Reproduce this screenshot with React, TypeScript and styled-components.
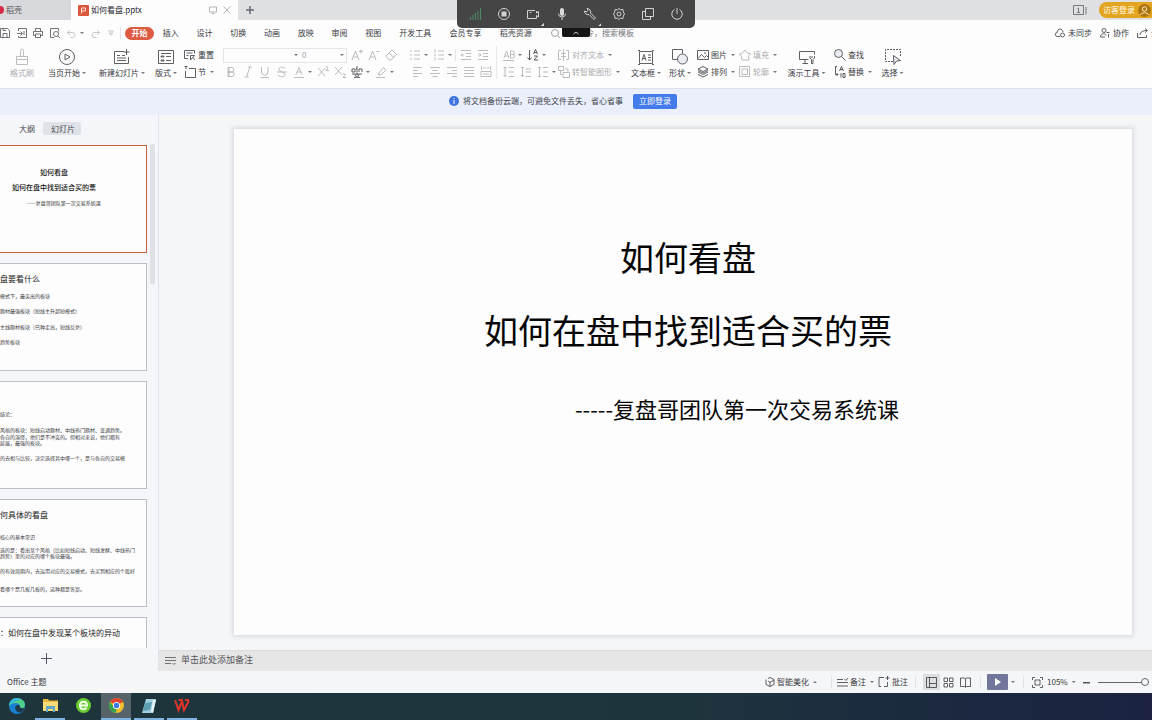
import React from 'react';
import styled, { createGlobalStyle, css } from 'styled-components';

const GlobalStyle = createGlobalStyle`
  *, *::before, *::after { box-sizing: border-box; }
  html, body { margin: 0; height: 100%; }
  body {
    overflow: hidden;
    background: #f4f6f8;
    color: #3a3a3e;
    font-family: "Noto Sans CJK SC", "Noto Sans", sans-serif;
    font-size: 8px;
    line-height: 12px;
  }
  button, input {
    font: inherit;
    color: inherit;
    border: 0;
    margin: 0;
    padding: 0;
    background: none;
  }
  button { white-space: nowrap; text-align: left; }
  ul { list-style: none; margin: 0; padding: 0; }
`;

/* ---------- shared ---------- */

const Svg = styled.svg<{ $w?: number; $h?: number }>`
  display: block;
  flex: none;
  width: ${(p) => p.$w ?? 12}px;
  height: ${(p) => p.$h ?? p.$w ?? 12}px;
  fill: none;
  stroke: currentColor;
  stroke-width: 1;
  overflow: visible;
`;

const LineIcon = styled(Svg)`
  opacity: 0.8;
`;

type IconProps = { d: string; w?: number; h?: number; children?: React.ReactNode };

function Icon({ d, w = 12, h, children }: IconProps) {
  return (
    <LineIcon $w={w} $h={h ?? w} viewBox={`0 0 ${w} ${h ?? w}`} aria-hidden="true">
      <path d={d} />
      {children}
    </LineIcon>
  );
}

const CaretShape = styled.span<{ $up?: boolean }>`
  flex: none;
  width: 4px;
  height: 2px;
  background: #77777c;
  clip-path: ${(p) => (p.$up ? 'polygon(50% 0, 100% 100%, 0 100%)' : 'polygon(0 0, 100% 0, 50% 100%)')};
`;

const Divider = styled.span<{ $gap?: number; $h?: number }>`
  flex: none;
  width: 1px;
  height: ${(p) => p.$h ?? 12}px;
  margin: 0 ${(p) => p.$gap ?? 2}px;
  background: #e2e3e6;
`;

const Screen = styled.div`
  position: relative;
  display: flex;
  flex-direction: column;
  height: 100vh;
  overflow: hidden;
`;

/* ---------- title bar ---------- */

const TitleBar = styled.header`
  display: flex;
  flex: 0 0 20px;
  align-items: center;
  background: #e0e1e3;
`;

const DocTab = styled.div<{ $active?: boolean; $w: number }>`
  display: flex;
  flex: 0 0 ${(p) => p.$w}px;
  align-items: center;
  gap: 2px;
  height: 100%;
  padding: 0 7px;
  background: ${(p) => (p.$active ? '#fdfdfe' : '#d8d9dc')};
  color: ${(p) => (p.$active ? '#26262a' : '#55555a')};
`;

const DocName = styled.span`
  flex: 1;
  white-space: nowrap;
`;

const DaokeMark = styled.span`
  width: 8px;
  height: 8px;
  margin-left: -11px;
  border-radius: 50%;
  background: #d8294a;
`;

const TabTools = styled.span`
  display: flex;
  gap: 6px;
  color: #a2a2a8;
`;

const NewTab = styled.button`
  padding: 0 8px;
  color: #4a4a5c;
`;

const AccountArea = styled.div`
  display: flex;
  align-items: center;
  gap: 12px;
  margin: 0 -6px 0 auto;
  color: #77777c;
`;

const LoginPill = styled.button`
  display: flex;
  align-items: center;
  gap: 3px;
  height: 16px;
  padding: 0 7px 0 4px;
  border-radius: 8px;
  background: #e3a51f;
  color: #fffbe8;
`;

/* ---------- menu ---------- */

const Ribbon = styled.section`
  flex: 0 0 69px;
  border-bottom: 1px solid #dfe0e9;
  background: #fdfdfe;
`;

const MenuRow = styled.nav`
  display: flex;
  align-items: center;
  height: 26px;
  overflow: hidden;
`;

const QuickAccess = styled.div`
  display: flex;
  flex: 0 0 125px;
  align-items: center;
`;

const QuickButton = styled.button<{ $w?: number; $off?: boolean }>`
  display: flex;
  align-items: center;
  gap: 4px;
  width: ${(p) => p.$w ?? 17}px;
  color: ${(p) => (p.$off ? '#b9b9bd' : '#505056')};
`;

const HomeTab = styled.button`
  flex: 0 0 29px;
  height: 13px;
  border-radius: 7px;
  background: #dc5b41;
  color: #fff;
  font-weight: 700;
  text-align: center;
`;

const TabGrid = styled.div<{ $cols: number; $w: number }>`
  display: grid;
  flex: 0 0 ${(p) => p.$w}px;
  grid-template-columns: repeat(${(p) => p.$cols}, 1fr);
  justify-items: center;
`;

const SearchBox = styled.label`
  display: flex;
  align-items: center;
  gap: 2px;
  padding-left: 10px;
  color: #8a8a90;
  input { width: 100px; height: 12px; outline: 0; }
  input::placeholder { color: #77777c; opacity: 1; }
`;

const ShareArea = styled.div`
  display: flex;
  gap: 8px;
  margin: 0 -15px 0 auto;
`;

const LabelButton = styled.button`
  display: flex;
  align-items: center;
  gap: 3px;
`;

/* ---------- ribbon tools ---------- */

const ToolRow = styled.div`
  display: flex;
  height: 42px;
  overflow: hidden;
`;

const disabled = css<{ $off?: boolean }>`
  color: ${(p) => (p.$off ? '#acacb0' : '#3a3a3e')};
`;

const BigTool = styled.button<{ $w: number; $off?: boolean }>`
  display: flex;
  flex: 0 0 ${(p) => p.$w}px;
  flex-direction: column;
  align-items: center;
  gap: 2px;
  height: 35px;
  padding-top: 3px;
  ${disabled}
`;

const BigLabel = styled.span`
  display: flex;
  align-items: center;
  gap: 2px;
`;

const Stack = styled.div<{ $w: number; $pad?: number; $line?: boolean }>`
  display: flex;
  flex: 0 0 ${(p) => p.$w}px;
  flex-direction: column;
  gap: 3px;
  height: 33px;
  padding-top: 2px;
  padding-left: ${(p) => p.$pad ?? 0}px;
  ${(p) => p.$line && 'border-left: 1px solid #e8e9ec;'}
`;

const Line = styled.div<{ $pad?: number }>`
  display: flex;
  align-items: center;
  height: 14px;
  padding-left: ${(p) => p.$pad ?? 0}px;
`;

const SmallTool = styled.button<{ $off?: boolean }>`
  display: flex;
  align-items: center;
  gap: 2px;
  height: 14px;
  ${disabled}
  ${CaretShape} { margin-left: 2px; }
`;

const Glyph = styled.button<{ $off?: boolean; $caret?: boolean }>`
  display: flex;
  flex: 0 0 ${(p) => (p.$caret ? 24 : 17)}px;
  align-items: center;
  gap: 3px;
  height: 14px;
  padding-left: 3px;
  ${disabled}
`;

const FontBox = styled.div`
  display: flex;
  align-items: center;
  width: 124px;
  height: 15px;
  margin: 0 1px;
  border: 1px solid #e6e6ea;
  color: #a0a0a6;
`;

const FontField = styled.div<{ $grow?: boolean }>`
  display: flex;
  flex: ${(p) => (p.$grow ? '1' : '0 0 46px')};
  align-items: center;
  padding: 0 2px;
  input { flex: 1; width: 0; min-width: 0; height: 12px; }
`;

function Big({ label, w, off, caret = true, children }: { label: string; w: number; off?: boolean; caret?: boolean; children: React.ReactNode }) {
  return (
    <BigTool $w={w} $off={off}>
      {children}
      <BigLabel>{label}{caret && <CaretShape />}</BigLabel>
    </BigTool>
  );
}

function Small({ label, d, off, caret = true, children }: { label: string; d: string; off?: boolean; caret?: boolean; children?: React.ReactNode }) {
  return (
    <SmallTool $off={off}>
      <Icon d={d}>{children}</Icon>
      {label}
      {caret && <CaretShape />}
    </SmallTool>
  );
}

function G({ name, d, caret, on, children }: { name: string; d: string; caret?: boolean; on?: boolean; children?: React.ReactNode }) {
  return (
    <Glyph aria-label={name} $off={!on} $caret={caret}>
      <Icon d={d}>{children}</Icon>
      {caret && <CaretShape />}
    </Glyph>
  );
}

/* ---------- backup notice ---------- */

const Notice = styled.div`
  display: flex;
  flex: 0 0 26px;
  align-items: center;
  justify-content: center;
  gap: 4px;
  padding: 0 26px 2px 0;
  background: #eaeffb;
  color: #44464e;
`;

const NoticeButton = styled.button`
  height: 15px;
  margin-left: 6px;
  padding: 0 6px;
  border-radius: 2px;
  background: #447bea;
  color: #fff;
`;

/* ---------- workspace ---------- */

const Workspace = styled.main`
  display: flex;
  flex: 1;
  min-height: 0;
`;

const SidePanel = styled.aside`
  display: flex;
  flex: 0 0 159px;
  flex-direction: column;
  border-right: 1px solid #e0e3e9;
  background: #f4f6f9;
`;

const PanelTabs = styled.div`
  display: flex;
  flex: 0 0 29px;
  align-items: center;
  gap: 8px;
  padding: 0 0 2px 19px;
`;

const PanelTab = styled.button<{ $active?: boolean }>`
  height: 13px;
  padding: ${(p) => (p.$active ? '0 6px 0 8px' : '0')};
  border-radius: 2px;
  background: ${(p) => (p.$active ? '#dfe3e8' : 'transparent')};
  color: #4a4b52;
`;

const ThumbArea = styled.div`
  display: flex;
  flex: 1;
  gap: 3px;
  min-height: 0;
  overflow: hidden;
`;

const ThumbList = styled.ul`
  display: flex;
  flex: 0 0 147px;
  flex-direction: column;
  gap: 10px;
  padding-top: 1px;
`;

const Thumb = styled.li<{ $active?: boolean }>`
  flex: 0 0 108px;
  overflow: hidden;
  border: solid ${(p) => (p.$active ? '#c9603f' : '#b9bec4')};
  border-width: 1px 1px 1px 0;
  background: #fdfdfe;
  color: #3c3c40;
  font-size: 5px;
  line-height: 6px;
  white-space: nowrap;
`;

const ThumbTitle = styled.div<{ $top: number }>`
  margin-top: ${(p) => p.$top}px;
  color: #222;
  font-size: 8px;
  line-height: 10px;
`;

const ThumbLine = styled.div<{ $top?: number }>`
  margin-top: ${(p) => p.$top ?? 0}px;
`;

const ThumbCover = styled.div`
  width: 108px;
  padding-top: 21px;
  color: #111;
  font-size: 7px;
  font-weight: 500;
  line-height: 10px;
  text-align: center;
  p { margin: 0 0 5px; }
`;

const ThumbAuthor = styled.div`
  margin-top: 8px;
  padding-left: 20px;
  color: #333;
  font-size: 5px;
  font-weight: 400;
  line-height: 6px;
`;

const ScrollHandle = styled.span`
  width: 5px;
  height: 140px;
  border-radius: 2px;
  background: #dfe1e5;
`;

const AddSlide = styled.button`
  display: flex;
  flex: 0 0 23px;
  align-items: center;
  padding: 0 0 2px 41px;
  color: #33334a;
`;

const Editor = styled.section`
  display: flex;
  flex: 1;
  flex-direction: column;
  min-width: 0;
`;

const Canvas = styled.div`
  display: flex;
  flex: 1;
  min-height: 0;
  padding: 14px 20px 15px 75px;
`;

const Slide = styled.article`
  display: flex;
  flex: 1;
  flex-direction: column;
  align-items: center;
  padding: 103px 0 0 10px;
  background: #fdfdfe;
  box-shadow: 0 0 4px 2px #dcdee2;
  color: #060606;
`;

const SlideTitle = styled.h1`
  margin: 0 0 23px;
  font-size: 34px;
  font-weight: 400;
  line-height: 50px;
`;

const SlideAuthor = styled.p`
  margin: 13px 0 0 98px;
  font-size: 22px;
  line-height: 34px;
`;

const Notes = styled.button`
  display: flex;
  flex: 0 0 21px;
  align-items: center;
  gap: 5px;
  padding: 0 0 2px 6px;
  border-top: 1px solid #dcdde0;
  background: #e6e6e7;
  color: #55555a;
  font-size: 9px;
`;

/* ---------- status bar ---------- */

const StatusBar = styled.footer`
  display: flex;
  flex: 0 0 22px;
  align-items: center;
  padding: 0 3px 0 7px;
  background: #f5f6f8;
`;

const StatusRight = styled.div`
  display: flex;
  align-items: center;
  margin-left: auto;
`;

const StatusButton = styled.button<{ $w?: number }>`
  display: flex;
  align-items: center;
  gap: 2px;
  width: ${(p) => (p.$w ? p.$w + 'px' : 'auto')};
  ${CaretShape} { margin-left: 2px; }
`;

const ViewButton = styled.button<{ $active?: boolean }>`
  display: grid;
  place-items: center;
  width: 17px;
  height: 16px;
  background: ${(p) => (p.$active ? '#dcdee1' : 'transparent')};
`;

const PlayButton = styled.button`
  display: grid;
  place-items: center;
  width: 21px;
  height: 16px;
  margin-right: 3px;
  border-radius: 1px;
  background: #72769a;
  color: #fff;
`;

const ZoomSlider = styled.input`
  width: 51px;
  height: 10px;
  margin-left: 8px;
  appearance: none;
  &::-webkit-slider-runnable-track { height: 1px; background: #66666c; }
  &::-webkit-slider-thumb {
    appearance: none;
    width: 8px;
    height: 8px;
    margin-top: -4px;
    border: 1px solid #66666c;
    border-radius: 50%;
    background: #f5f6f8;
  }
`;

/* ---------- taskbar ---------- */

const Taskbar = styled.div`
  display: flex;
  flex: 0 0 27px;
  gap: 3px;
  padding-left: 2px;
  background: linear-gradient(90deg, #1f353c 0%, #1e343d 60%, #1b2740 85%, #1b2340 100%);
`;

const TaskButton = styled.button<{ $open?: boolean; $active?: boolean }>`
  display: grid;
  place-items: center;
  width: 30px;
  height: 27px;
  border-bottom: 2px solid ${(p) => (p.$open ? '#7fb4e2' : 'transparent')};
  background: ${(p) => (p.$active ? '#56646a' : 'transparent')};
  background-clip: padding-box;
`;

/* ---------- floating recorder ---------- */

const Recorder = styled.div`
  position: absolute;
  top: 0;
  left: 50%;
  display: grid;
  grid-template-columns: repeat(8, 1fr);
  align-items: center;
  justify-items: center;
  width: 238px;
  height: 28px;
  padding: 0 4px;
  border-radius: 0 0 5px 5px;
  background: #454546;
  color: #f4f4f4;
  transform: translateX(-50%);
`;

const RecorderButton = styled.button<{ $menu?: boolean }>`
  display: flex;
  align-items: flex-end;
  height: 12px;
  &::after {
    content: '';
    display: ${(p) => (p.$menu ? 'block' : 'none')};
    width: 3px;
    height: 3px;
    margin: 0 -5px -6px 2px;
    background: #e8e8e8;
    clip-path: polygon(100% 0, 100% 100%, 0 100%);
  }
`;

const RecorderToggle = styled.button`
  position: absolute;
  top: 28px;
  left: 50%;
  display: grid;
  place-items: center;
  width: 28px;
  height: 9px;
  border-radius: 0 0 2px 2px;
  background: #161616;
  color: #fff;
  transform: translateX(-50%);
`;

const tabs = ['插入', '设计', '切换', '动画', '放映', '审阅', '视图'];
const wideTabs = ['开发工具', '会员专享', '稻壳资源'];

export default function App() {
  return (
    <Screen>
      <GlobalStyle />
      <TitleBar>
        <DocTab $w={71}><DaokeMark /><DocName>稻壳</DocName></DocTab>
        <DocTab $w={167} $active>
          <Svg $w={11} viewBox="0 0 11 11">
            <rect width="11" height="11" rx="1" fill="#d9573c" stroke="none" />
            <path d="M3.5 8.5V3h4v3h-4" stroke="#ffe2d8" />
          </Svg>
          <DocName>如何看盘.pptx</DocName>
          <TabTools>
            <Icon w={8} d="M.5 1h7v5h-7zM2.5 7.500h3" />
            <Icon w={8} d="M.5.5l7 7M7.500.5l-7 7" />
          </TabTools>
        </DocTab>
        <NewTab aria-label="新建标签"><Icon w={8} d="M4 0v8M0 4h8"><path d="M4 0v8M0 4h8" /></Icon></NewTab>
        <AccountArea>
          <Svg $w={14} $h={10} viewBox="0 0 14 10">
            <path d="M.5.500h10v9H.500zM13 2v7.500M4.500 3.500l1-.5v4.500M4 7.500h3" />
          </Svg>
          <LoginPill>
            访客登录
            <Svg $w={13} viewBox="0 0 13 13">
              <circle cx="6.500" cy="6.500" r="6.500" fill="#ab7511" stroke="none" />
              <circle cx="6.500" cy="5" r="2.200" stroke="#ffe9b8" />
              <path d="M2.500 11c.5-3 7.500-3 8 0" stroke="#ffe9b8" />
            </Svg>
          </LoginPill>
        </AccountArea>
      </TitleBar>

      <Ribbon>
        <MenuRow>
          <QuickAccess>
            <QuickButton aria-label="保存"><Icon w={10} d="M.5.5h7l2 2v7h-9zM3 9.500v-4h4v4M3 .5v2h3" /></QuickButton>
            <QuickButton aria-label="输出" $w={16}><Icon w={10} d="M1.500 3V.5h8v9h-8V8M0 5.500h5M3.500 3.500L5.500 5.500l-2 2M7 3v4" /></QuickButton>
            <QuickButton aria-label="打印"><Icon w={10} d="M2.500 3V.5h5V3M2.500 7.500h-2v-4h9v4h-2M2.500 6h5v3.500h-5z" /></QuickButton>
            <QuickButton aria-label="预览"><Icon w={10} d="M4 9.500H.5v-9h8v3M8 8l2 2"><circle cx="6" cy="6" r="2.500" /></Icon></QuickButton>
            <QuickButton aria-label="撤销" $w={24} $off><Icon w={9} d="M.5 3.500h5a2.500 2.500 0 010 5h-2M3 1L.5 3.500 3 6" /><CaretShape /></QuickButton>
            <QuickButton aria-label="恢复" $off><Icon w={9} d="M8.500 3.500h-5a2.500 2.500 0 000 5h2M6 1l2.500 2.500L6 6" /></QuickButton>
            <QuickButton aria-label="更多" $w={12} $off><Icon w={6} d="M0 1h6M1 3l2 2 2-2z" /></QuickButton>
            <Divider $gap={0} />
          </QuickAccess>
          <HomeTab>开始</HomeTab>
          <TabGrid $cols={7} $w={236}>{tabs.map((t) => <button key={t}>{t}</button>)}</TabGrid>
          <TabGrid $cols={3} $w={151}>{wideTabs.map((t) => <button key={t}>{t}</button>)}</TabGrid>
          <SearchBox>
            <Icon w={9} d="M6.500 6.500L9 9"><circle cx="4" cy="4" r="3.500" /></Icon>
            <input aria-label="搜索" placeholder="搜索命令，搜索模板" />
          </SearchBox>
          <ShareArea>
            <LabelButton><Icon w={10} d="M5 8.500H2.500a2 2 0 01-.3-4C2.500 0 7.500 0 8 4"><circle cx="7.500" cy="7" r="2" /></Icon>未同步</LabelButton>
            <LabelButton><Icon w={10} d="M.5 9c0-4 5-4 5.500-1.500M.5 9H5M6.500 4.500h3M8.500 6v3.500"><circle cx="4" cy="2.500" r="2" /></Icon>协作</LabelButton>
            <LabelButton><Icon w={11} d="M.5 5v4.500h9V7M3 7c0-3 3-4.500 7-4.500M8 .5l2.500 2L8 4.500" />分享</LabelButton>
          </ShareArea>
        </MenuRow>

        <ToolRow>
          <Big label="格式刷" w={44} off caret={false}>
            <Icon w={16} d="M6.500 7V1.500a1.500 1.500 0 013 0V7M2.500 10.500V7.500h11v3M2.500 10.500v5h11v-5z" />
          </Big>
          <Big label="当页开始" w={46}>
            <Icon w={16} d="M6 5l5 3-5 3z"><circle cx="8" cy="8" r="7.500" /></Icon>
          </Big>
          <Big label="新建幻灯片" w={64}>
            <Icon w={16} d="M10 2.500H.5v12h14V8M12.500 0v6M9.500 3h6M3 6.500h3M8 6.500h3M3 9h9M3 11.500h9" />
          </Big>
          <Big label="版式" w={24}>
            <Icon w={16} d="M.5 1.500h15v13H.5zM3 4.500h10M3 7h3v1H3zM8 7.500h5M3 11h3v1H3zM8 11.500h5" />
          </Big>
          <Stack $w={44} $pad={6}>
            <Small label="重置" caret={false} d="M4 9.500H.5v-8h10v3M2.500 4h6M2.500 6.500h2M6.500 11V6.500h4L6.500 11M11 11l-2-2.500" />
            <Small label="节" d="M.5.5h3M2 0v3M5 2.500h6.500v9h-10V5" />
          </Stack>
          <Stack $w={178}>
            <Line>
              <FontBox>
                <FontField $grow><input aria-label="字体" /><CaretShape /></FontField>
                <FontField><input aria-label="字号" defaultValue="0" /><CaretShape /></FontField>
              </FontBox>
              <G name="增大字号" d="M1 11L4.500 2 8 11M2.500 8h4M8 2.500h4M10 .5v4" />
              <G name="减小字号" d="M1 11L4.500 2 8 11M2.500 8h4M8.500 2.500h3" />
              <G name="清除格式" d="M1 7l6-6 4.500 4.500L6 11H4zM4 4l5 4.500" />
            </Line>
            <Line>
              <G name="加粗" d="M3 1.500h3.500a2 2 0 010 4.500H3zM3 6h4a2 2 0 010 4.500H3zM4 1.500v9" />
              <G name="倾斜" d="M8 1L4.500 11M6 1h4M2.500 11h4" />
              <G name="下划线" d="M2.500 1v5a3 3 0 006.500 0V1M1.500 11.500H10" />
              <G name="删除线" d="M9 2.500C8 .5 2.500.5 3 3.500S9 5.500 9 8.500 3 11.500 2 9M1 6h10" />
              <G name="字体颜色" caret d="M3 8.500L6 1.500l3 7M4 6h4M1 11.500h10" />
              <G name="上标" d="M1 2l7 8M8 2l-7 8M9 1c2-1 3 .5 0 3.500h3" />
              <G name="下标" d="M1 1l7 8M8 1L1 9M9 8c2-1 3 .5 0 3.500h3" />
              <G name="拼音" on caret d="M1 3h3v3H1zM6 0v6M8 6V3h3v3M6 2.500h-1M1 8h10M6 6.500v3M3 11.500c3 0 5-1 5-3M9 11.500c-3 0-5-1-5-3" />
              <G name="突出显示" caret d="M4 7l4.500-5.500L11 4 6.500 8.500 3.500 9zM1 11.500h9" />
            </Line>
          </Stack>
          <Stack $w={96} $pad={6}>
            <Line>
              <G name="项目符号" caret d="M1 2h2M5 2h6M1 6h2M5 6h6M1 10h2M5 10h6" />
              <G name="编号" caret d="M2 .5v3M5 2h6M2 4.500v3M5 6h6M2 8.500v3M5 10h6" />
              <Divider $gap={1} />
              <G name="减少缩进" d="M1 1.500h10M6 4.500h5M6 7.500h5M1 10.500h10M4 6H1M2.500 4.500L1 6l1.500 1.500" />
              <G name="增加缩进" d="M1 1.500h10M6 4.500h5M6 7.500h5M1 10.500h10M1 6h3M2.500 4.500L4 6 2.500 7.500" />
            </Line>
            <Line $pad={3}>
              <G name="左对齐" d="M1 1.500h9M1 4.500h5M1 7.500h9M1 10.500h5" />
              <G name="居中" d="M1 1.500h10M3.500 4.500h5M1 7.500h10M3.500 10.500h5" />
              <G name="右对齐" d="M1 1.500h10M6 4.500h5M1 7.500h10M6 10.500h5" />
              <G name="两端对齐" d="M1 1.500h10M1 4.500h10M1 7.500h10M1 10.500h10" />
              <G name="分散对齐" d="M1 5.500h10v5H1zM3 8h6M1.500 0v4M10.500 0v4M3 2h2.500M6.500 2H9" />
            </Line>
          </Stack>
          <Stack $w={61} $pad={3} $line>
            <Line>
              <G name="文字方向" caret d="M1 9L3.500 2 6 9M2 7h3M7.500 2v7H10a1.500 1.500 0 000-3.500H7.500M7.500 2h2a1.500 1.500 0 010 3.500M0 11.500h11" />
              <G name="排序" on caret d="M2.500 1v10M.5 8.500l2 2.500 2-2.500M6.500 5L8.500.5l2 4.500M7 3.500h3M7 7h3.500L7 11h4" />
            </Line>
            <Line>
              <G name="行距" d="M2 1v9.500M.5 2.500L2 1l1.500 1.500M.5 9L2 10.500 3.500 9M5.500 1.500H11M5.500 6H11M5.500 10.500H11" />
              <G name="段前间距" d="M1 1.500h3M2.500 2v8.500M1 9l1.500 1.500L4 9M5.500 3H11M5.500 6H11M5.500 10.500H11" />
              <G name="段落间距" caret d="M1 1.500h3M2.500 1.500v9M1 10.500h3M6 1.500h5M6 6h5M6 10.500h5" />
            </Line>
          </Stack>
          <Stack $w={67}>
            <Small label="对齐文本" off d="M3 1.500H.5v9H3M8 1.500h2.500v9H8M5.500 0v12M3 4.500h5M3 7.500h5" />
            <Small label="转智能图形" off d="M.5.5h5v4h-5zM2.500 4.500v4h2M5 6.500h6.500v5H5zM7 3h3v3" />
          </Stack>
          <Big label="文本框" w={42}>
            <Icon w={16} d="M1.500 2.500h13v12h-13zM4 11.500L6 5.500l2 6M4.500 9.500h3M10 6h3M10 8.500h3M10 11h3M0 1.500h2M14 1.500h2M0 15.500h2M14 15.500h2" />
          </Big>
          <Big label="形状" w={26}>
            <Icon w={16} d="M6 10.500H.5V.5h10v4"><circle cx="10.500" cy="10" r="5" fill="#e5e9f0" /></Icon>
          </Big>
          <Stack $w={42} $pad={4}>
            <Small label="图片" d="M.5 1.500h11v9H.500zM1 9.500l3.500-4 3 3 2-2 2 2M7 4h2" />
            <Small label="排列" d="M6 .5L11 3 6 5.500 1 3zM1 6l5 2.500L11 6M1 8.500L6 11l5-2.500M1 4.500L6 7l5-2.500" />
          </Stack>
          <Stack $w={46} $pad={4}>
            <Small label="填充" off d="M3 4.500L6 1l3 3.500h2.500L9.500 7l.5 4H3L2.500 7.500.5 5z" />
            <Small label="轮廓" off d="M.5.5h10v10H.500zM3 3h5.500v5.500H3z" />
          </Stack>
          <Big label="演示工具" w={51}>
            <Icon w={16} d="M9.500 10.500H.5v-8h15v3M6 10.500v4M3.500 14.500H9M11 7v2l1.500 1.500v4h1.500v-4L15.500 9V7M13 7v2" />
          </Big>
          <Stack $w={42} $pad={2}>
            <Small label="查找" caret={false} d="M7.500 7.500l4 4"><circle cx="4.500" cy="4.500" r="4" fill="#e5e9f0" /></Small>
            <Small label="替换" d="M3 .5H1.500v8H4M2.500 7L4 8.500 2.500 10M5.500 5L7.500.5l2 4.500M6 3.500h3M7 7v4.500M9 7.500h2v4H9z" />
          </Stack>
          <Big label="选择" w={37}>
            <LineIcon $w={16} viewBox="0 0 16 16">
              <path d="M8 12.500H.5V.5h15V7" strokeDasharray="2 1" />
              <path d="M8.500 6.500l7 5-4 .5-2.500 3.500z" fill="#e5e9f0" />
            </LineIcon>
          </Big>
        </ToolRow>
      </Ribbon>

      <Notice>
        <Svg $w={10} viewBox="0 0 10 10">
          <circle cx="5" cy="5" r="5" fill="#3f74e0" stroke="none" />
          <path d="M5 4v4M5 2v1" stroke="#fff" />
        </Svg>
        将文档备份云端，可避免文件丢失，省心省事
        <NoticeButton>立即登录</NoticeButton>
      </Notice>

      <Workspace>
        <SidePanel>
          <PanelTabs><PanelTab>大纲</PanelTab><PanelTab $active>幻灯片</PanelTab></PanelTabs>
          <ThumbArea>
            <ThumbList>
              <Thumb $active>
                <ThumbCover>
                  <p>如何看盘</p>
                  <p>如何在盘中找到适合买的票</p>
                  <ThumbAuthor>-----复盘哥团队第一次交易系统课</ThumbAuthor>
                </ThumbCover>
              </Thumb>
              <Thumb>
                <ThumbTitle $top={10}>盘要看什么</ThumbTitle>
                <ThumbLine $top={9}>模式下，最突出的板块</ThumbLine>
                <ThumbLine $top={9}>题材最强板块（短线主升超短模式）</ThumbLine>
                <ThumbLine $top={10}>主线题材板块（已种走高，短线反复）</ThumbLine>
                <ThumbLine $top={9}>趋势板块</ThumbLine>
              </Thumb>
              <Thumb>
                <ThumbLine $top={29}>结论：</ThumbLine>
                <ThumbLine $top={10}>风格的板块：短线启动题材、中线热门题材、变通趋势。</ThumbLine>
                <ThumbLine $top={1}>各自的演绎，他们是不冲突的。但相对来说，他们都有</ThumbLine>
                <ThumbLine>延展，最强的板块。</ThumbLine>
                <ThumbLine $top={9}>的去相与比较，决定选择其中哪一个，是与各自的交易模</ThumbLine>
              </Thumb>
              <Thumb>
                <ThumbTitle $top={10}>何具体的看盘</ThumbTitle>
                <ThumbLine $top={14}>核心的基本常识</ThumbLine>
                <ThumbLine $top={7}>选的是：看出某个风格（比如短线启动、短线发酵、中线热门</ThumbLine>
                <ThumbLine>趋势）里的对应的哪个板块最强。</ThumbLine>
                <ThumbLine $top={9}>的有效周期内，去运用对应的交易模式，去买到相应的个股好</ThumbLine>
                <ThumbLine $top={12}>看哪个票几板几板的，这种都是答案。</ThumbLine>
              </Thumb>
              <Thumb>
                <ThumbTitle $top={10}>：如何在盘中发现某个板块的异动</ThumbTitle>
              </Thumb>
            </ThumbList>
            <ScrollHandle />
          </ThumbArea>
          <AddSlide aria-label="新建幻灯片"><Icon w={11} d="M5.500 0v11M0 5.500h11" /></AddSlide>
        </SidePanel>

        <Editor>
          <Canvas>
            <Slide>
              <SlideTitle>如何看盘</SlideTitle>
              <SlideTitle>如何在盘中找到适合买的票</SlideTitle>
              <SlideAuthor>-----复盘哥团队第一次交易系统课</SlideAuthor>
            </Slide>
          </Canvas>
          <Notes><Icon w={11} d="M0 2.500h11M0 5.500h11M0 8.500h6M7.500 8l1.500 1.500L10.500 8" />单击此处添加备注</Notes>
        </Editor>
      </Workspace>

      <StatusBar>
        <span>Office 主题</span>
        <StatusRight>
          <StatusButton $w={61}><Icon w={10} d="M3 1.500l2-1 4 2v5l-4 2-4-2v-5M3 4l2 1.500L9 3M5 5.500v4" />智能美化<CaretShape $up /></StatusButton>
          <Divider $gap={5} />
          <StatusButton $w={41}><Icon w={11} d="M0 2.500h6M7.500 2l1.500 1.500L11 1M0 5.500h11M0 9h11" />备注<CaretShape /></StatusButton>
          <StatusButton><Icon w={12} d="M6 1.500H1v9h2M9.500 6v4.500H6M9.500 0v4M7.500 2h4" />批注</StatusButton>
          <Divider $gap={7} />
          <ViewButton $active aria-label="普通视图"><Icon w={11} d="M.5.500h10v10H.500zM3.500.5v10M3.500 6.500h7" /></ViewButton>
          <ViewButton aria-label="浏览视图"><Icon w={11} d="M1 1h3.500v3.500H1zM6.500 1H10v3.500H6.500zM1 6.500h3.500V10H1zM6.500 6.500H10V10H6.500z" /></ViewButton>
          <ViewButton aria-label="阅读视图"><Icon w={11} d="M5.500 2v8M5.500 2l-1-1H.500v8.500h4l1 1 1-1h4V1h-4z" /></ViewButton>
          <Divider $gap={6} />
          <PlayButton aria-label="放映">
            <Svg $w={8} viewBox="0 0 8 8"><path d="M1 0l6 4-6 4z" fill="#fff" stroke="none" /></Svg>
          </PlayButton>
          <CaretShape />
          <Divider $gap={8} />
          <StatusButton aria-label="适应窗口" $w={15}><Icon w={11} d="M.5 3V.5H3M8 .5h2.500V3M10.500 8v2.500H8M3 10.500H.5V8M3 3h5v5H3z" /></StatusButton>
          <StatusButton $w={36}>105%<CaretShape /></StatusButton>
          <StatusButton aria-label="缩小"><Icon w={7} d="M0 3.500h7M0 4h7" /></StatusButton>
          <ZoomSlider type="range" aria-label="缩放" min={0} max={100} defaultValue={100} />
        </StatusRight>
      </StatusBar>

      <Taskbar>
        <TaskButton aria-label="Edge">
          <Svg $w={16} viewBox="0 0 16 16">
            <g stroke="none">
              <circle cx="8" cy="8" r="8" fill="#1b7fd0" />
              <path d="M0 8C0 3 4 0 8 0s8 3 8 6.500S13 11 10.500 10.500C12 8 10 5 7 5S1 6 0 8z" fill="#4fcf8a" />
              <path d="M0 8C0 3 4 0 7 0c3 0 4 2 4 2S3 3 0 8z" fill="#35b6dc" />
              <path d="M10.500 7.500c0 2 2.500 3.500 5 2.500-1 3-3 4.500-5 4.500C7 14 5.500 11 6.500 8.500c1-1.500 3.500-2 4-1z" fill="#1f3a4a" />
            </g>
          </Svg>
        </TaskButton>
        <TaskButton aria-label="文件资源管理器" $open>
          <Svg $w={15} $h={13} viewBox="0 0 15 13">
            <g stroke="none">
              <path d="M0 0h5l1 1.500h9V12H0z" fill="#e9b93f" />
              <path d="M0 3h15v9H0z" fill="#fadb78" />
              <path d="M3 7h9v6h-2v-3H5v3H3z" fill="#5ea5c8" />
            </g>
          </Svg>
        </TaskButton>
        <TaskButton aria-label="浏览器">
          <Svg $w={15} viewBox="0 0 15 15">
            <circle cx="7.500" cy="7.500" r="7.500" fill="#6ccb34" stroke="none" />
            <path d="M4 7.500h7c0-5-7-5-7 0s5 4.500 6.500 2" stroke="#f2ffe8" strokeWidth="2" />
          </Svg>
        </TaskButton>
        <TaskButton aria-label="Chrome" $open $active>
          <Svg $w={15} viewBox="0 0 15 15">
            <g stroke="none">
              <circle cx="7.500" cy="7.500" r="7.500" fill="#efc02e" />
              <path d="M1 3.700A7.500 7.500 0 0114 3.700L7.500 7.500z" fill="#dd4433" />
              <path d="M1 3.700l4 5.500 2.500 2L7 15A7.500 7.500 0 011 3.700z" fill="#35a350" />
              <circle cx="7.500" cy="7.500" r="3.500" fill="#fff" />
              <circle cx="7.500" cy="7.500" r="2.700" fill="#4078e0" />
            </g>
          </Svg>
        </TaskButton>
        <TaskButton aria-label="记事本" $open>
          <Svg $w={14} viewBox="0 0 14 14">
            <g stroke="none">
              <path d="M4 0h10l-3 14H0z" fill="#9fd0de" />
              <path d="M11 1h3l-3 13-2-1z" fill="#e8f3f5" />
              <path d="M3 4l7-1-2 8-7 1z" fill="#5f9fb2" />
            </g>
          </Svg>
        </TaskButton>
        <TaskButton aria-label="WPS" $open>
          <Svg $w={16} $h={13} viewBox="0 0 16 13">
            <path d="M1 1l3.500 10L8 2l2 9 5-9.500M4.500 1h4M11 1h4" stroke="#e0342a" strokeWidth="2" />
          </Svg>
        </TaskButton>
      </Taskbar>

      <Recorder>
        <Svg $w={12} viewBox="0 0 12 12"><path d="M1.500 12V9M4 12V7M6.500 12V5M9 12V3M11.500 12V0" stroke="#4c8c63" /></Svg>
        <RecorderButton aria-label="录制"><Icon d=""><circle cx="6" cy="6" r="5.500" /><rect x="4" y="4" width="4" height="4" fill="currentColor" /></Icon></RecorderButton>
        <RecorderButton $menu aria-label="摄像头"><Icon d="M8 2.500H.5v8h9V7.500l2 1.500V3.500l-2 1.500V3M2.500 4.500h2" /></RecorderButton>
        <RecorderButton aria-label="麦克风"><Icon d="M2.500 5.500a3.500 3.500 0 007 0M6 9v3"><rect x="4" y="0" width="4" height="8" rx="2" fill="#fff" stroke="none" /></Icon></RecorderButton>
        <RecorderButton $menu aria-label="工具"><Icon d="M6.500 5l5 5-1.500 1.500-5-5A3.500 3.500 0 01.5 3l2 1 1.500-1.500L3 .5a3.500 3.500 0 013.500 4.500z" /></RecorderButton>
        <RecorderButton aria-label="设置"><Icon d="M6 .5l1.500 1.300 2.500-.3.3 2.500L11.500 6l-1.200 2-.3 2.500-2.500-.3L6 11.500l-1.500-1.300-2.500.3L1.700 8 .5 6l1.200-2L2 1.500l2.500.3z"><circle cx="6" cy="6" r="2" /></Icon></RecorderButton>
        <RecorderButton aria-label="窗口"><Icon d="M3.500.5h8v8h-8zM3.500 3.500h-3v8h8v-3" /></RecorderButton>
        <RecorderButton aria-label="关闭"><Icon d="M6 0v6M3.500 1.500a5.200 5.200 0 105 0" /></RecorderButton>
      </Recorder>
      <RecorderToggle aria-label="收起"><Icon w={6} h={4} d="M.5 3L3 1l2.500 2" /></RecorderToggle>
    </Screen>
  );
}
